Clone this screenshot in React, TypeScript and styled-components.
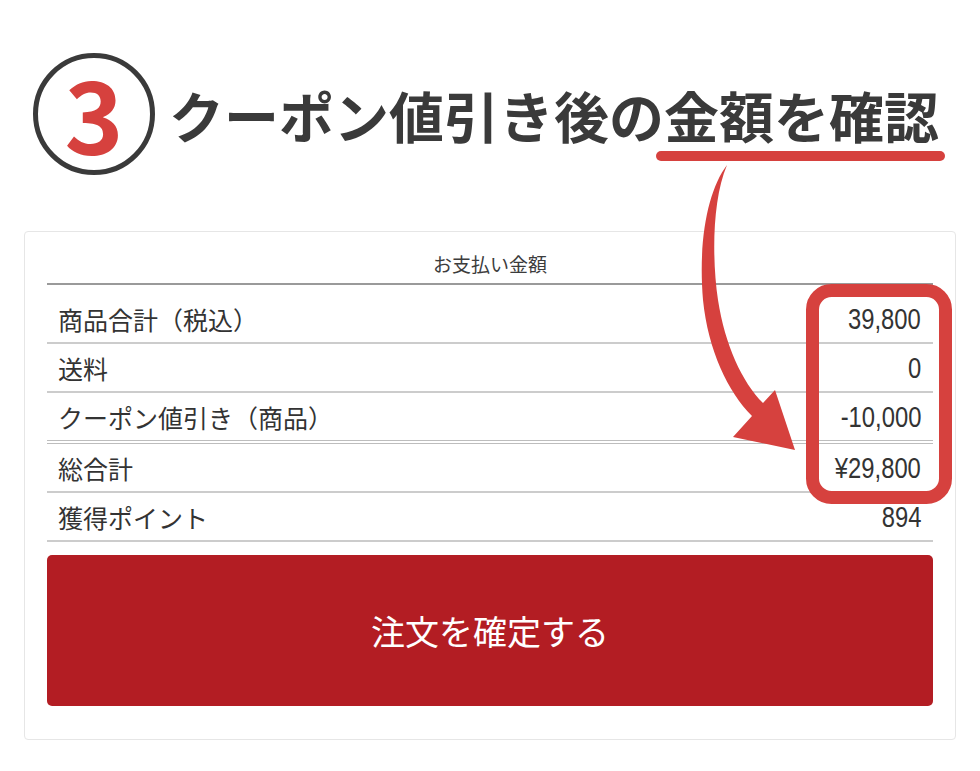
import React from "react";
import styled, { createGlobalStyle } from "styled-components";

const GlobalStyle = createGlobalStyle`
  html, body { margin: 0; padding: 0; background: #ffffff; }
  body { font-family: "Noto Sans CJK JP", "Noto Sans", sans-serif; }
  * { box-sizing: border-box; }
`;

const Page = styled.div`
  position: relative;
  width: 980px;
  height: 771px;
  overflow: hidden;
  background: #ffffff;
`;

const Header = styled.header`
  display: flex;
  align-items: center;
  gap: 14px;
  padding: 53px 0 0 33px;
`;

const Badge = styled.div`
  width: 122px;
  height: 122px;
  border: 5px solid #3a3a3a;
  border-radius: 50%;
  display: flex;
  align-items: center;
  justify-content: center;
`;

const BadgeNum = styled.span`
  font-family: "Noto Sans CJK JP", sans-serif;
  font-weight: 700;
  font-size: 100px;
  line-height: 1;
  color: #d6413e;
  margin-top: -4px;
`;

const Title = styled.h1`
  margin: 0;
  font-family: "Noto Sans CJK JP", sans-serif;
  font-weight: 700;
  font-size: 55px;
  line-height: 1;
  color: #3a3a3a;
  white-space: nowrap;
`;

const Mark = styled.span`
  position: relative;
  &::after {
    content: "";
    position: absolute;
    left: -8px;
    right: -6px;
    bottom: -7px;
    height: 10px;
    border-radius: 5px;
    background: #d6413e;
  }
`;

const Card = styled.section`
  margin: 56px 24px 0 24px;
  height: 509px;
  border: 1px solid #e6e6e6;
  border-radius: 4px;
  padding: 0 22px;
  display: flex;
  flex-direction: column;
`;

const CardHeading = styled.div`
  height: 53px;
  padding-top: 19px;
  text-align: center;
  font-size: 19px;
  line-height: 25px;
  color: #3c3c3c;
  border-bottom: 2px solid #9a9a9a;
`;

const Table = styled.div`
  display: flex;
  flex-direction: column;
  padding-top: 10px;
`;

const Row = styled.div<{ $double?: boolean }>`
  display: flex;
  align-items: center;
  justify-content: space-between;
  height: ${(p) => (p.$double ? 51 : 49)}px;
  padding: 2px 12px 0 11px;
  border-bottom: ${(p) => (p.$double ? "4px double #bdbdbd" : "2px solid #cccccc")};
`;

const Label = styled.span`
  font-size: 25px;
  line-height: 1;
  color: #333333;
`;

const Amount = styled.span`
  display: inline-block;
  font-family: "Liberation Sans", Arial, sans-serif;
  font-size: 29px;
  line-height: 1;
  color: #333333;
  transform: scaleX(0.82);
  transform-origin: right center;
`;

const ConfirmButton = styled.button`
  margin-top: 13px;
  height: 151px;
  width: 100%;
  border: none;
  border-radius: 5px;
  background: #b31d23;
  color: #ffffff;
  font-family: "Noto Sans CJK JP", sans-serif;
  font-size: 34px;
  font-weight: 400;
  cursor: pointer;
`;

const Overlay = styled.svg`
  position: absolute;
  left: 0;
  top: 0;
  width: 980px;
  height: 771px;
  pointer-events: none;
`;

const rows: { label: string; value: string; double?: boolean }[] = [
  { label: "商品合計（税込）", value: "39,800" },
  { label: "送料", value: "0" },
  { label: "クーポン値引き（商品）", value: "-10,000", double: true },
  { label: "総合計", value: "¥29,800" },
  { label: "獲得ポイント", value: "894" },
];

export default function App() {
  return (
    <Page>
      <GlobalStyle />
      <Header>
        <Badge>
          <BadgeNum>3</BadgeNum>
        </Badge>
        <Title>
          クーポン値引き後の<Mark>金額を確認</Mark>
        </Title>
      </Header>
      <Card>
        <CardHeading>お支払い金額</CardHeading>
        <Table>
          {rows.map((r) => (
            <Row key={r.label} $double={r.double}>
              <Label>{r.label}</Label>
              <Amount>{r.value}</Amount>
            </Row>
          ))}
        </Table>
        <ConfirmButton>注文を確定する</ConfirmButton>
      </Card>
      <Overlay viewBox="0 0 980 771">
        <path
          d="M 727 165 C 712 200, 712 260, 718 300 C 725 345, 742 382, 763 403 L 775 390 L 795 450 L 733 437 L 752 416 C 728 392, 708 350, 703 300 C 698 240, 708 190, 727 165 Z"
          fill="#d6413e"
        />
        <rect x="812.5" y="290.5" width="133" height="207" rx="19" ry="19" fill="none" stroke="#d6413e" strokeWidth="13" />
      </Overlay>
    </Page>
  );
}
